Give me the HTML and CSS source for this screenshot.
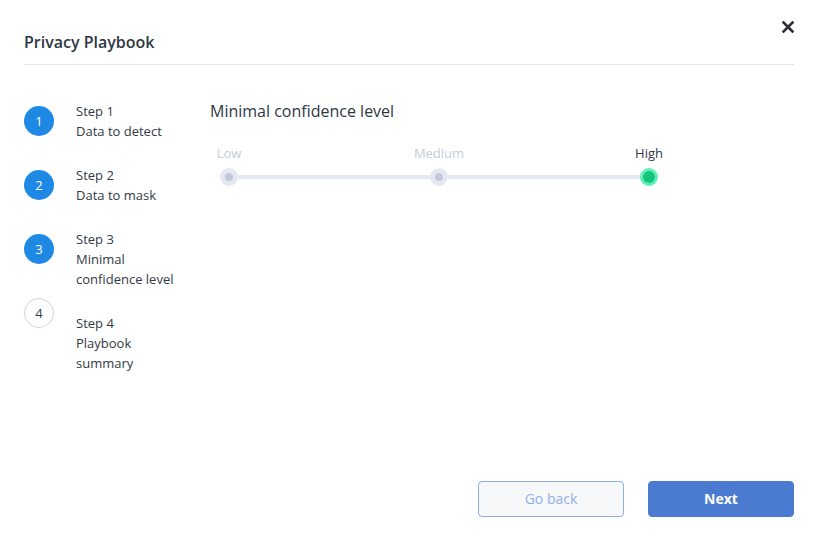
FILE: index.html
```html
<!DOCTYPE html>
<html>
    <head>
        <meta charset="UTF-8" />
        <meta name="viewport" content="width=device-width" />
        <title>Privacy Playbook</title>
        <link rel="stylesheet" href="styles.css">
    </head>
    <body>
        <div class="modal">
            <header class="modal-header">
                <h1>Privacy Playbook</h1>
                <button class="close" aria-label="Close">
                    <svg width="12" height="12" viewBox="0 0 12 12">
                        <path d="M1.5 1.5 L10.5 10.5 M10.5 1.5 L1.5 10.5" stroke="#2b2d33" stroke-width="2.6" stroke-linecap="square" />
                    </svg>
                </button>
            </header>

            <div class="modal-body">
                <ol class="steps">
                    <li class="step done">
                        <span class="step-num">1</span>
                        <div class="step-text">Step 1<br>Data to detect</div>
                    </li>
                    <li class="step done">
                        <span class="step-num">2</span>
                        <div class="step-text">Step 2<br>Data to mask</div>
                    </li>
                    <li class="step done">
                        <span class="step-num">3</span>
                        <div class="step-text">Step 3<br>Minimal<br>confidence level</div>
                    </li>
                    <li class="step todo">
                        <span class="step-num">4</span>
                        <div class="step-text">Step 4<br>Playbook<br>summary</div>
                    </li>
                </ol>

                <section class="panel">
                    <h2>Minimal confidence level</h2>
                    <div class="slider">
                        <div class="track"></div>
                        <div class="stop">
                            <span class="stop-label">Low</span>
                            <span class="dot"></span>
                        </div>
                        <div class="stop">
                            <span class="stop-label">Medium</span>
                            <span class="dot"></span>
                        </div>
                        <div class="stop active">
                            <span class="stop-label">High</span>
                            <span class="dot"></span>
                        </div>
                    </div>
                </section>
            </div>

            <footer class="modal-footer">
                <button class="btn btn-secondary">Go back</button>
                <button class="btn btn-primary">Next</button>
            </footer>
        </div>
    </body>
</html>
```

FILE: styles.css
```css
html, body {
    margin: 0;
    padding: 0;
    background-color: #ffffff;
}

body {
    font-family: "Open Sans", "Noto Sans", sans-serif;
    color: #2f3744;
}

.modal {
    height: 100vh;
    box-sizing: border-box;
    padding: 0 24px 20px 24px;
    display: flex;
    flex-direction: column;
}

.modal-header {
    display: flex;
    justify-content: space-between;
    align-items: flex-start;
    border-bottom: 1px solid #dfe5f1;
    padding: 30px 0 10px 0;
}

.modal-header h1 {
    margin: 0;
    font-size: 16px;
    line-height: 24px;
    font-weight: 600;
    color: #2f3744;
}

.close {
    margin: -9px 0 0 0;
    padding: 0;
    border: none;
    background: none;
    width: 12px;
    height: 12px;
    display: block;
}

.close svg {
    display: block;
}

.modal-body {
    display: flex;
    flex: 1;
}

.steps {
    list-style: none;
    margin: 36px 0 0 0;
    padding: 0;
    width: 186px;
    flex-shrink: 0;
}

.step {
    display: flex;
    align-items: flex-start;
    min-height: 64px;
}

.step-num {
    width: 30px;
    height: 30px;
    margin-top: 5px;
    border-radius: 50%;
    box-sizing: border-box;
    display: flex;
    align-items: center;
    justify-content: center;
    font-size: 13px;
    flex-shrink: 0;
}

.step.done .step-num {
    background-color: #1e88e5;
    color: #ffffff;
}

.step.todo .step-num {
    border: 1px solid #cfd5e3;
    color: #3a3f48;
}

.step-text {
    margin-left: 22px;
    font-size: 13px;
    line-height: 20px;
    color: #333a45;
}

.step.todo .step-text {
    padding-top: 20px;
}

.panel {
    flex: 1;
}

.panel h2 {
    margin: 35px 0 0 0;
    font-size: 16px;
    line-height: 22px;
    font-weight: 400;
    color: #2f3744;
}

.slider {
    position: relative;
    width: 480px;
    margin: 22px 0 0 -11px;
    display: flex;
    justify-content: space-between;
}

.track {
    position: absolute;
    left: 30px;
    right: 30px;
    top: 31px;
    height: 4px;
    background-color: #e4e8f3;
}

.stop {
    position: relative;
    width: 60px;
    display: flex;
    flex-direction: column;
    align-items: center;
}

.stop-label {
    font-size: 13px;
    line-height: 18px;
    color: #c5ccdb;
    margin-bottom: 6px;
}

.dot {
    width: 18px;
    height: 18px;
    border-radius: 50%;
    background-color: #e4e8f3;
    display: flex;
    align-items: center;
    justify-content: center;
}

.dot::after {
    content: "";
    width: 8px;
    height: 8px;
    border-radius: 50%;
    background-color: #c4c9d8;
}

.stop.active .stop-label {
    color: #2f3744;
}

.stop.active .dot {
    background-color: #5ff0b6;
}

.stop.active .dot::after {
    width: 12px;
    height: 12px;
    background-color: #13c47b;
}

.modal-footer {
    display: flex;
    justify-content: flex-end;
    gap: 24px;
}

.btn {
    width: 146px;
    height: 36px;
    padding: 0 0 2px 0;
    border-radius: 4px;
    font-family: "Open Sans", "Noto Sans", sans-serif;
    font-size: 14px;
    cursor: pointer;
}

.btn-secondary {
    background-color: #f7f8fa;
    border: 1px solid #8fb0ea;
    color: #8fb0ea;
}

.btn-primary {
    background-color: #4a7bd0;
    border: 1px solid #4a7bd0;
    color: #ffffff;
    font-weight: 700;
}
```
